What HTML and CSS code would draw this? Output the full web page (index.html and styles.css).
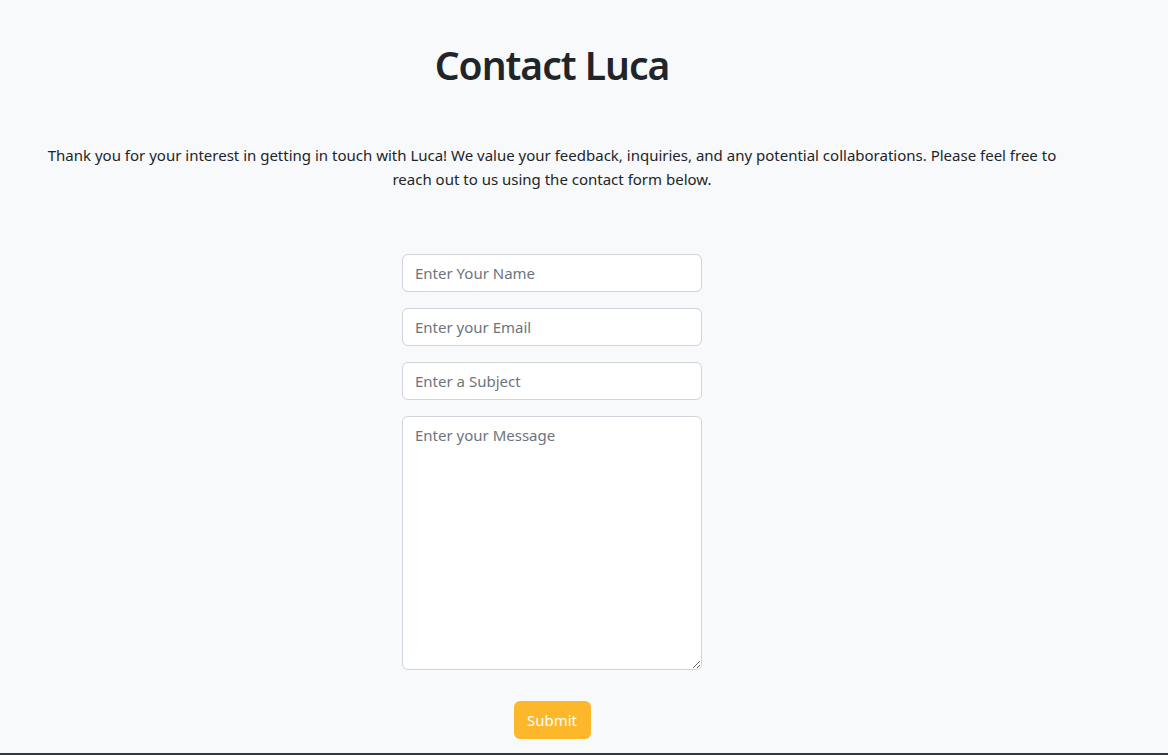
FILE: index.html
```html
<!DOCTYPE html>
<html lang="en">
<head>
<meta charset="utf-8">
<title>Contact Luca</title>
<link rel="stylesheet" href="styles.css">
</head>
<body>
<main class="page">
  <h1 class="title">Contact Luca</h1>
  <p class="intro">Thank you for your interest in getting in touch with Luca! We value your feedback, inquiries, and any potential collaborations. Please feel free to reach out to us using the contact form below.</p>
  <form class="contact-form">
    <input class="field" type="text" placeholder="Enter Your Name">
    <input class="field" type="email" placeholder="Enter your Email">
    <input class="field" type="text" placeholder="Enter a Subject">
    <textarea class="field field-area" placeholder="Enter your Message"></textarea>
    <button class="submit" type="button">Submit</button>
  </form>
</main>
<footer class="footer"></footer>
</body>
</html>
```
FILE: styles.css
```css
html, body {
  margin: 0;
  padding: 0;
}
body {
  background: #f8f9fa;
  color: #212529;
  font-family: "Segoe UI", "Noto Sans", "Open Sans", sans-serif;
  font-size: 16px;
  line-height: 24px;
  height: 755px;
  overflow: hidden;
}
.page {
  width: 1104px;
  padding-top: 41px;
  text-align: center;
}
.title {
  margin: 0;
  font-size: 39px;
  line-height: 48px;
  font-weight: 600;
  letter-spacing: -1px;
}
.intro {
  margin: 54px auto 0;
  width: 1040px;
  font-size: 15px;
}
.contact-form {
  margin: 63px auto 0;
  width: 300px;
  display: flex;
  flex-direction: column;
  align-items: stretch;
  gap: 16px;
}
.field {
  box-sizing: border-box;
  height: 38px;
  padding: 6px 12px;
  border: 1px solid #ced4da;
  border-radius: 6px;
  background: #fff;
  font: inherit;
  font-size: 15px;
  color: #212529;
}
.field::placeholder {
  color: #6c757d;
}
.field-area {
  height: 254px;
  resize: vertical;
}
.submit {
  align-self: center;
  margin-top: 15px;
  width: 77px;
  height: 38px;
  border: none;
  border-radius: 6px;
  background: #fdb72b;
  color: #fff;
  font: inherit;
  font-size: 15px;
}
.footer {
  margin-top: 14px;
  height: 20px;
  background: #343a40;
}
```
